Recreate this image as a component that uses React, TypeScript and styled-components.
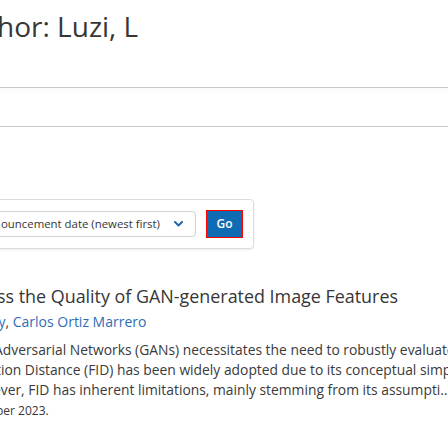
import React from "react";
import styled, { createGlobalStyle } from "styled-components";

const Global = createGlobalStyle`
  html, body { margin: 0; padding: 0; background: #ffffff; }
  body {
    font-family: "Open Sans", "Noto Sans", Arial, sans-serif;
    color: #363636;
    width: 448px;
    height: 448px;
    overflow: hidden;
  }
`;

const Page = styled.div`
  display: flex;
  flex-direction: column;
  width: 448px;
  overflow: hidden;
`;

const Heading = styled.h1<{ $indent: number }>`
  margin: 11px 0 0;
  font-size: 28px;
  line-height: 31.5px;
  font-weight: 400;
  color: #363636;
  white-space: nowrap;
  text-indent: ${(p) => p.$indent}px;
`;

const Rule = styled.div<{ $top: number; $shadow?: boolean }>`
  margin-top: ${(p) => p.$top}px;
  height: 0;
  border-top: 1px solid #c8c8c8;
  box-shadow: ${(p) => (p.$shadow ? "0 2px 3px rgba(0,0,0,0.08)" : "none")};
`;

const SortBox = styled.form`
  margin: 72px 0 0 -20px;
  width: 274px;
  box-sizing: border-box;
  display: flex;
  align-items: center;
  gap: 10px;
  padding: 10px;
  border: 1px solid #dcdcdc;
  border-radius: 4px;
  box-shadow: 0 1px 2px rgba(0, 0, 0, 0.08);
  background: #fff;
`;

const Select = styled.div<{ $indent: number }>`
  flex: 1;
  min-width: 0;
  height: 26px;
  box-sizing: border-box;
  display: flex;
  align-items: center;
  justify-content: space-between;
  border: 1px solid #d4d4d4;
  border-radius: 4px;
  padding: 0 12px 0 ${(p) => p.$indent}px;
  font-size: 11.4px;
  color: #363636;
  white-space: nowrap;
  overflow: hidden;
  background: #fff;
`;

const Chevron = styled.svg`
  width: 9px;
  height: 6px;
  flex: none;
`;

const GoButton = styled.button`
  width: 37px;
  height: 28px;
  box-sizing: border-box;
  border: 1px solid #ff0000;
  border-radius: 0;
  background: #0f6cb2;
  color: #ffffff;
  font-family: "Open Sans", Arial, sans-serif;
  font-size: 12px;
  font-weight: 600;
  padding: 0;
  flex: none;
`;

const Result = styled.div`
  margin-top: 36px;
  display: flex;
  flex-direction: column;
`;

const Title = styled.p<{ $indent: number }>`
  margin: 0;
  font-size: 17.9px;
  line-height: 22.5px;
  color: #363636;
  white-space: nowrap;
  text-indent: ${(p) => p.$indent}px;
`;

const Authors = styled.p<{ $indent: number }>`
  margin: 5px 0 0;
  font-size: 14px;
  line-height: 20px;
  color: #3c3c3c;
  white-space: nowrap;
  text-indent: ${(p) => p.$indent}px;
`;

const AuthorLink = styled.a`
  color: #2f6db6;
  text-decoration: none;
`;

const Abstract = styled.div`
  margin-top: 8px;
  display: flex;
  flex-direction: column;
`;

const AbstractLine = styled.span<{ $indent: number }>`
  display: block;
  font-size: 13.85px;
  line-height: 20px;
  color: #3a3a3a;
  white-space: nowrap;
  text-indent: ${(p) => p.$indent}px;
`;

const Dates = styled.p<{ $indent: number }>`
  margin: 2px 0 0;
  font-size: 12px;
  line-height: 18px;
  color: #363636;
  white-space: nowrap;
  text-indent: ${(p) => p.$indent}px;
`;

const abstractLines = [
  { text: "Adversarial Networks (GANs) necessitates the need to robustly evaluate these models.", indent: -6 },
  { text: "tion Distance (FID) has been widely adopted due to its conceptual simplicity,", indent: -4 },
  { text: "ever, FID has inherent limitations, mainly stemming from its assumpti\u2026", indent: -7 },
];

export default function App() {
  return (
    <>
      <Global />
      <Page>
        <Heading $indent={-3}>hor: Luzi, L</Heading>
        <Rule $top={44} $shadow />
        <Rule $top={38} />
        <SortBox onSubmit={(e) => e.preventDefault()}>
          <Select $indent={9}>
            <span>ouncement date (newest first)</span>
            <Chevron viewBox="0 0 9 6">
              <path d="M1 1 L4.5 4.5 L8 1" fill="none" stroke="#1f6aaf" strokeWidth="2" strokeLinecap="round" strokeLinejoin="round" />
            </Chevron>
          </Select>
          <GoButton type="submit">Go</GoButton>
        </SortBox>
        <Result>
          <Title $indent={-3}>ss the Quality of GAN-generated Image Features</Title>
          <Authors $indent={-42}>
            <AuthorLink href="#">Murray</AuthorLink>, <AuthorLink href="#">Carlos Ortiz Marrero</AuthorLink>
          </Authors>
          <Abstract>
            {abstractLines.map((l) => (
              <AbstractLine key={l.text} $indent={l.indent}>{l.text}</AbstractLine>
            ))}
          </Abstract>
          <Dates $indent={-4}>ber 2023.</Dates>
        </Result>
      </Page>
    </>
  );
}
